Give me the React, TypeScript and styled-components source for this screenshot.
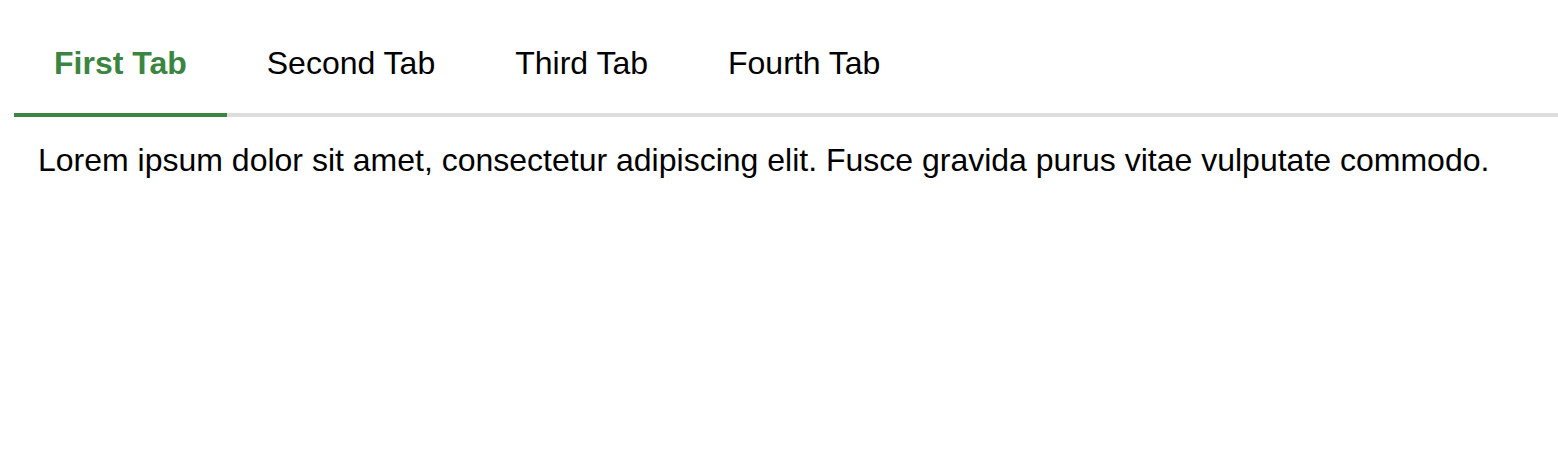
import React, { useState } from "react";
import styled, { createGlobalStyle } from "styled-components";

const Global = createGlobalStyle`
  html, body { margin: 0; padding: 0; background: #ffffff; }
  body { font-family: "Liberation Sans", Arial, Helvetica, sans-serif; color: #000; }
`;

const Page = styled.div`
  padding: 14px 0 0 14px;
`;

const TabList = styled.div`
  display: flex;
  border-bottom: 4px solid #dddddd;
`;

const Tab = styled.button<{ $active: boolean }>`
  font-family: "Liberation Sans", Arial, Helvetica, sans-serif;
  font-size: 32px;
  line-height: 36px;
  font-weight: ${(p) => (p.$active ? 700 : 400)};
  color: ${(p) => (p.$active ? "#3a8541" : "#000000")};
  background: transparent;
  border: none;
  border-bottom: 4px solid ${(p) => (p.$active ? "#3a8541" : "transparent")};
  margin-bottom: -4px;
  padding: 31px 40px 32px 40px;
  cursor: pointer;
`;

const Panel = styled.div`
  font-size: 32px;
  line-height: 36px;
  padding: 25px 24px;
`;

const tabs = ["First Tab", "Second Tab", "Third Tab", "Fourth Tab"];

export default function App() {
  const [active, setActive] = useState(0);
  return (
    <Page>
      <Global />
      <TabList>
        {tabs.map((t, i) => (
          <Tab key={t} $active={i === active} onClick={() => setActive(i)}>
            {t}
          </Tab>
        ))}
      </TabList>
      <Panel>
        Lorem ipsum dolor sit amet, consectetur adipiscing elit. Fusce gravida purus vitae vulputate commodo.
      </Panel>
    </Page>
  );
}
